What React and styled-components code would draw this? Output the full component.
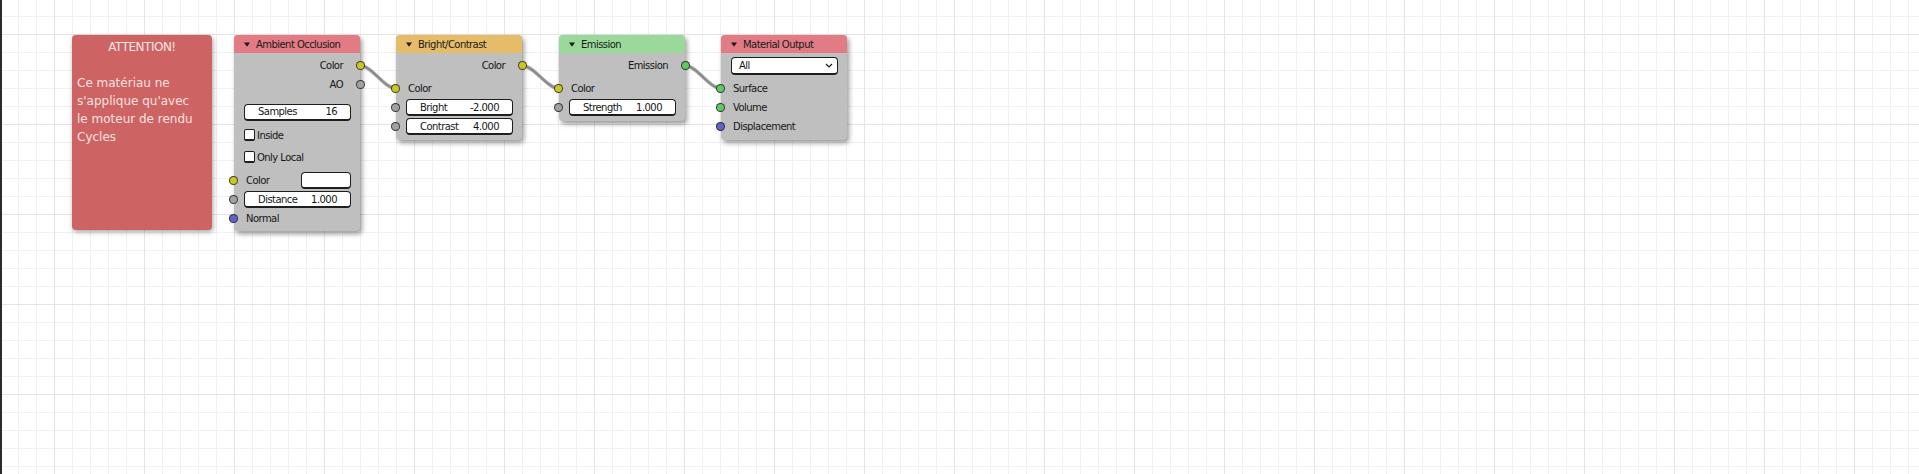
import React from "react";
import styled, { createGlobalStyle } from "styled-components";

const GlobalStyle = createGlobalStyle`
  html, body { margin: 0; padding: 0; background: #ffffff; overflow: hidden; }
  body { font-family: "DejaVu Sans", "Liberation Sans", sans-serif; }
`;

const Page = styled.div`
  display: flex;
  width: 1919px;
  height: 474px;
`;

const EdgeBar = styled.div`
  width: 2px;
  flex: 0 0 2px;
  background: #2b2b2b;
`;

const Canvas = styled.div`
  position: relative;
  flex: 1;
  height: 100%;
  background-color: #ffffff;
  background-image:
    linear-gradient(to right, #e4e4e4 1px, transparent 1px),
    linear-gradient(to bottom, #e4e4e4 1px, transparent 1px),
    linear-gradient(to right, #f1f1f1 1px, transparent 1px),
    linear-gradient(to bottom, #f1f1f1 1px, transparent 1px);
  background-size: 90px 100%, 100% 90px, 18px 100%, 100% 18px;
  background-position: 52px 0, 0 34px, 16px 0, 0 16px;
`;

const LinkLayer = styled.svg`
  position: absolute;
  left: 0;
  top: 0;
  width: 100%;
  height: 100%;
  z-index: 1;
  pointer-events: none;
`;

const Frame = styled.div`
  position: absolute;
  left: ${(p) => p.$x}px;
  top: ${(p) => p.$y}px;
  width: ${(p) => p.$w}px;
  height: ${(p) => p.$h}px;
  box-sizing: border-box;
  padding: 3px 5px 0;
  background: #ce6363;
  border-radius: 4px;
  box-shadow: 1px 2px 5px rgba(0, 0, 0, 0.35);
  color: #f6e2e2;
  z-index: 0;
`;

const FrameTitle = styled.div`
  text-align: center;
  font-size: 12px;
  line-height: 18px;
  letter-spacing: -0.5px;
  color: #f7e6e6;
`;

const FrameText = styled.div`
  margin-top: 18px;
  font-size: 12px;
  line-height: 18px;
  white-space: pre-line;
`;

const Node = styled.div`
  position: absolute;
  left: ${(p) => p.$x}px;
  top: ${(p) => p.$y}px;
  width: 126px;
  display: flex;
  flex-direction: column;
  background: #bfbfbf;
  border-radius: 4px;
  box-shadow: 2px 3px 5px rgba(0, 0, 0, 0.4);
  z-index: 2;
  color: #161616;
  font-size: 10px;
  letter-spacing: -0.55px;
`;

const Header = styled.div`
  height: 18px;
  display: flex;
  align-items: center;
  gap: 6px;
  padding-left: 10px;
  background: ${(p) => p.$color};
  border-radius: 4px 4px 0 0;
  font-size: 10px;
  color: #1a1a1a;
`;

const Body = styled.div`
  display: flex;
  flex-direction: column;
  padding: 3px 0 4px;
`;

const Row = styled.div`
  position: relative;
  height: ${(p) => p.$h || 19}px;
  margin-top: ${(p) => p.$mt || 0}px;
  display: flex;
  align-items: center;
  justify-content: ${(p) => (p.$out ? "flex-end" : "flex-start")};
  padding: ${(p) => (p.$out ? "0 17px 0 0" : p.$field ? "0 9px 0 10px" : "0 9px 0 12px")};
  box-sizing: border-box;
`;

const Socket = styled.span`
  position: absolute;
  top: 50%;
  ${(p) => (p.$out ? "right: -5px;" : "left: -5px;")}
  width: 9px;
  height: 9px;
  margin-top: -4.5px;
  box-sizing: border-box;
  border-radius: 50%;
  background: ${(p) => p.$color};
  border: 1px solid rgba(20, 20, 20, 0.75);
`;

const Field = styled.div`
  flex: 1;
  height: ${(p) => p.$h || 17}px;
  display: flex;
  align-items: center;
  justify-content: space-between;
  padding: ${(p) => (p.$select ? "0 4px 0 7px" : "0 13px")};
  box-sizing: border-box;
  background: #ffffff;
  border: 1px solid #1e1e1e;
  border-bottom-width: 2px;
  border-radius: 4px;
`;

const Swatch = styled.div`
  margin-left: auto;
  width: 50px;
  height: 17px;
  box-sizing: border-box;
  background: #ffffff;
  border: 1px solid #1e1e1e;
  border-bottom-width: 2px;
  border-radius: 4px;
`;

const CheckBox = styled.span`
  width: 11px;
  height: 12px;
  box-sizing: border-box;
  background: #ffffff;
  border: 1px solid #1e1e1e;
  border-bottom-width: 2px;
  border-radius: 2px;
  margin-right: 2px;
`;

const Triangle = () => (
  <svg width="6" height="5" viewBox="0 0 6 5">
    <path d="M0 0.5 L6 0.5 L3 4.8 Z" fill="#1a1a1a" />
  </svg>
);

const Chevron = () => (
  <svg width="8" height="5" viewBox="0 0 8 5">
    <path d="M1 1 L4 4 L7 1" fill="none" stroke="#1a1a1a" strokeWidth="1.2" />
  </svg>
);

const SOCK = {
  color: "#c7c729",
  value: "#a1a1a1",
  vector: "#6363c7",
  shader: "#63c763",
};

const OutRow = ({ label, type, mt }) => (
  <Row $out $mt={mt}>
    {label}
    <Socket $out $color={SOCK[type]} />
  </Row>
);

const InRow = ({ label, type, mt, h }) => (
  <Row $mt={mt} $h={h}>
    {label}
    <Socket $color={SOCK[type]} />
  </Row>
);

const FieldRow = ({ label, value, type, mt, h }) => (
  <Row $field $mt={mt} $h={h}>
    {type && <Socket $color={SOCK[type]} />}
    <Field>
      <span>{label}</span>
      <span>{value}</span>
    </Field>
  </Row>
);

const CheckRow = ({ label, mt }) => (
  <Row $field $h={22} $mt={mt}>
    <CheckBox />
    {label}
  </Row>
);

const links = [
  [358, 65.5, 394, 88.5],
  [520, 65.5, 557, 88.5],
  [683, 65.5, 719, 88.5],
];

export default function App() {
  return (
    <Page>
      <GlobalStyle />
      <EdgeBar />
      <Canvas>
        <LinkLayer>
          {links.map(([x1, y1, x2, y2], i) => {
            const d = `M${x1},${y1} C${x1 + 12},${y1} ${x2 - 12},${y2} ${x2},${y2}`;
            return (
              <g key={i}>
                <path d={d} fill="none" stroke="rgba(40,40,40,0.35)" strokeWidth="3.6" />
                <path d={d} fill="none" stroke="#8a8a8a" strokeWidth="2" />
              </g>
            );
          })}
        </LinkLayer>

        <Frame $x={70} $y={35} $w={140} $h={195}>
          <FrameTitle>ATTENTION!</FrameTitle>
          <FrameText>{"Ce matériau ne\ns'applique qu'avec\nle moteur de rendu\nCycles"}</FrameText>
        </Frame>

        <Node $x={232} $y={35}>
          <Header $color="#e27b83">
            <Triangle />
            Ambient Occlusion
          </Header>
          <Body>
            <OutRow label="Color" type="color" />
            <OutRow label="AO" type="value" />
            <FieldRow label="Samples" value="16" mt={8} h={20} />
            <CheckRow label="Inside" mt={2} />
            <CheckRow label="Only Local" />
            <Row $mt={2} $h={20}>
              <Socket $color={SOCK.color} />
              Color
              <Swatch />
            </Row>
            <FieldRow label="Distance" value="1.000" type="value" />
            <InRow label="Normal" type="vector" h={18} />
          </Body>
        </Node>

        <Node $x={394} $y={35}>
          <Header $color="#e7bc68">
            <Triangle />
            Bright/Contrast
          </Header>
          <Body>
            <OutRow label="Color" type="color" />
            <InRow label="Color" type="color" mt={4} />
            <FieldRow label="Bright" value="-2.000" type="value" />
            <FieldRow label="Contrast" value="4.000" type="value" />
          </Body>
        </Node>

        <Node $x={557} $y={35}>
          <Header $color="#9ad99a">
            <Triangle />
            Emission
          </Header>
          <Body>
            <OutRow label="Emission" type="shader" />
            <InRow label="Color" type="color" mt={4} />
            <FieldRow label="Strength" value="1.000" type="value" />
          </Body>
        </Node>

        <Node $x={719} $y={35}>
          <Header $color="#e27b83">
            <Triangle />
            Material Output
          </Header>
          <Body>
            <Row $field $h={20}>
              <Field $select $h={18}>
                <span>All</span>
                <Chevron />
              </Field>
            </Row>
            <InRow label="Surface" type="shader" mt={3} />
            <InRow label="Volume" type="shader" />
            <InRow label="Displacement" type="vector" />
          </Body>
        </Node>
      </Canvas>
    </Page>
  );
}
